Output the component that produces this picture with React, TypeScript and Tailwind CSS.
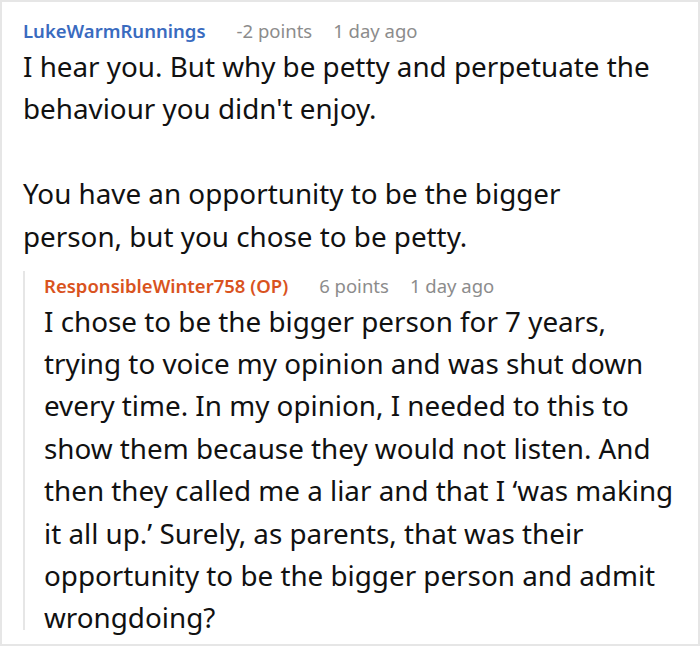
import React from 'react';

interface CommentProps {
  author: string;
  authorColor: string;
  points: string;
  time: string;
  lines: string[];
}

const Comment: React.FC<CommentProps> = ({ author, authorColor, points, time, lines }) => (
  <div>
    <div className="flex items-baseline text-[18.5px] leading-[29px]">
      <span className={`font-semibold ${authorColor}`}>{author}</span>
      <span className="ml-[31px] text-[#8c8c8c]">{points}</span>
      <span className="ml-[21px] text-[#8c8c8c]">{time}</span>
    </div>
    <div className="text-[27.8px] leading-[42.4px] text-[#111] whitespace-nowrap">
      {lines.map((line, i) => (
        <div key={i} className={i === lines.length - 1 ? 'h-[34px]' : 'h-[42.4px]'}>
          {line}
        </div>
      ))}
    </div>
  </div>
);

export default function App() {
  return (
    <div
      className="w-[700px] h-[646px] overflow-hidden border-2 border-[#e6e6e6] bg-white pl-[21px] pt-[14px]"
      style={{ fontFamily: '"Noto Sans", "Open Sans", sans-serif' }}
    >
      <Comment
        author="LukeWarmRunnings"
        authorColor="text-[#3a6bbf]"
        points="-2 points"
        time="1 day ago"
        lines={[
          'I hear you. But why be petty and perpetuate the',
          "behaviour you didn't enjoy.",
          '',
          'You have an opportunity to be the bigger',
          'person, but you chose to be petty.',
        ]}
      />

      <div className="mt-[22px] border-l-2 border-[#e6e6e6] pl-[19px]">
        <Comment
          author="ResponsibleWinter758 (OP)"
          authorColor="text-[#d9531e]"
          points="6 points"
          time="1 day ago"
          lines={[
            'I chose to be the bigger person for 7 years,',
            'trying to voice my opinion and was shut down',
            'every time. In my opinion, I needed to this to',
            'show them because they would not listen. And',
            'then they called me a liar and that I ‘was making',
            'it all up.’ Surely, as parents, that was their',
            'opportunity to be the bigger person and admit',
            'wrongdoing?',
          ]}
        />
      </div>
    </div>
  );
}
